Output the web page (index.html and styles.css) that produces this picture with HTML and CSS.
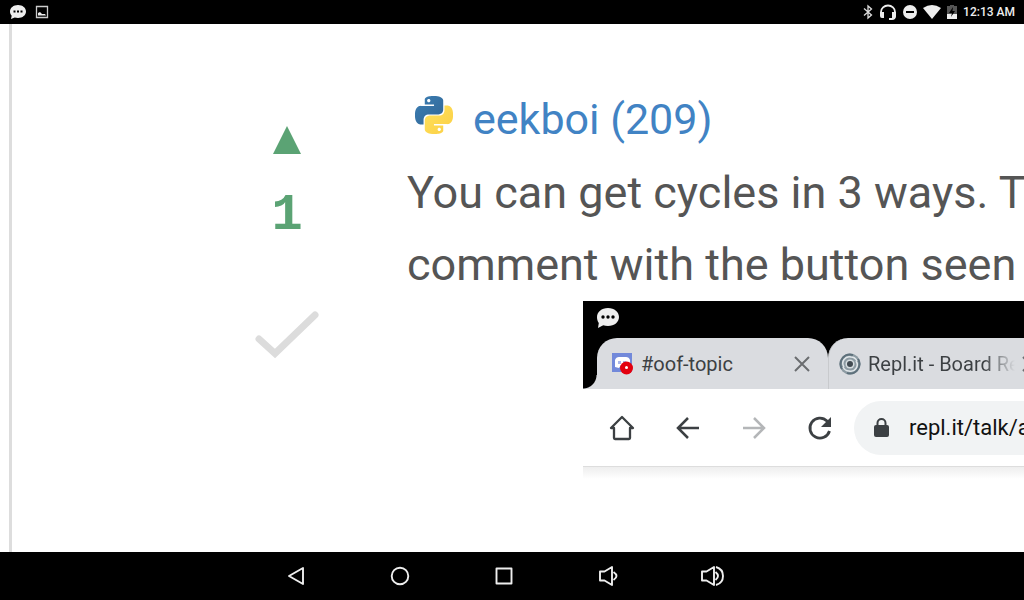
FILE: index.html
```html
<!DOCTYPE html>
<html lang="en">

<head>
    <meta charset="UTF-8">
    <meta name="viewport" content="width=device-width, initial-scale=1.0">
    <title>Repl Talk</title>
    <link rel="stylesheet" href="styles.css">
</head>

<body>
    <header class="status-bar">
        <svg width="18" height="16" viewBox="0 0 18 16">
            <path fill="#eee" d="M9 1c4.600 0 8 2.900 8 6.500S13.600 14 9 14c-1.200 0-2.300-.2-3.300-.5L2 15l.7-3.300C1.600 10.500 1 9.100 1 7.500 1 3.900 4.400 1 9 1z"/>
            <path d="M4.500 6.500h2v2h-2zM8 6.500h2v2H8zM11.500 6.500h2v2h-2z"/>
        </svg>
        <svg width="14" height="14" viewBox="0 0 14 14">
            <path fill="none" stroke="#ccc" stroke-width="1.300" d="M1.500 1.500h11v11h-11z"/>
            <path fill="#eee" d="M3 10.500V8l2-1 2 2h3l1 1.500z"/>
        </svg>
        <div class="status-right">
            <svg width="12" height="16" viewBox="0 0 12 16">
                <path fill="none" stroke="#ddd" stroke-width="1.300" d="M2 4.500l7.500 6.500L6 14V2l3.500 3L2 11.500"/>
            </svg>
            <svg width="18" height="17" viewBox="0 0 18 17">
                <path fill="none" stroke="#eee" stroke-width="1.800" d="M2 9V8a7 6.500 0 0 1 14 0v4q0 3-3 3h-3"/>
                <path fill="#eee" d="M1 8h4v6H3q-2 0-2-2zM13 8h4v4q0 2-2 2h-2z"/>
            </svg>
            <svg width="16" height="16" viewBox="0 0 16 16">
                <circle cx="8" cy="8" r="7" fill="#eee"/>
                <path d="M4 7h8v2H4z"/>
            </svg>
            <svg width="18" height="14" viewBox="0 0 18 14">
                <path fill="#eee" d="M0 3q9-6 18 0L9 14z"/>
            </svg>
            <svg width="12" height="16" viewBox="0 0 12 16">
                <path fill="#555" d="M1 2h3V1h4v1h3v13H1z"/>
                <path fill="#eee" d="M1 10h10v5H1z"/>
                <path d="M7 3L3 9h3l-1 4 4-6H6.500z"/>
            </svg>
            <span class="clock">12:13 AM</span>
        </div>
    </header>

    <main class="thread">
        <article class="comment">
            <div class="votes">
                <button aria-label="Upvote">
                    <svg width="28" height="28" viewBox="0 0 28 28"><path fill="#5ba374" d="M14 0l14 28H0z"/></svg>
                </button>
                <div class="score">1</div>
                <button aria-label="Accept answer">
                    <svg width="64" height="50" viewBox="0 0 64 50">
                        <path fill="none" stroke="#dcdcdc" stroke-width="7" stroke-linecap="round" d="M4 29l16 14.500L60 5"/>
                    </svg>
                </button>
            </div>

            <div class="content">
                <div class="author">
                    <svg width="38" height="38" viewBox="0 0 24 24">
                        <defs>
                            <linearGradient id="blue" x1="0" y1="0" x2="1" y2="1">
                                <stop offset="0" stop-color="#3c7fb5"/>
                                <stop offset="1" stop-color="#316594"/>
                            </linearGradient>
                            <linearGradient id="yellow" x1="1" y1="1" x2="0" y2="0">
                                <stop offset="0" stop-color="#ffe15c"/>
                                <stop offset="1" stop-color="#fbcf45"/>
                            </linearGradient>
                            <path id="snake" d="M14.250.18l.9.2.73.26.59.3.45.32.34.34.25.34.16.33.1.3.04.26.02.2-.01.13V8.500l-.05.63-.13.55-.21.46-.26.38-.3.31-.33.25-.35.19-.35.14-.33.1-.3.07-.26.04-.21.02H8.770l-.69.05-.59.14-.5.22-.41.27-.33.32-.27.35-.2.36-.15.37-.1.35-.07.32-.04.27-.02.21v3.060H3.170l-.21-.03-.28-.07-.32-.12-.35-.18-.36-.26-.36-.36-.35-.46-.32-.59-.28-.73-.21-.88-.14-1.050-.05-1.230.06-1.220.16-1.040.24-.87.32-.71.36-.57.4-.44.42-.33.42-.24.4-.16.36-.1.32-.05.24-.01h.16l.06.01h8.160v-.83H6.180l-.01-2.750-.02-.37.05-.34.11-.31.17-.28.25-.26.31-.23.38-.2.44-.18.51-.15.58-.12.64-.1.71-.06.77-.04.84-.02 1.270.05zm-6.300 1.980l-.23.33-.08.41.08.41.23.34.33.22.41.09.41-.09.33-.22.23-.34.08-.41-.08-.41-.23-.33-.33-.22-.41-.09-.41.09z"/>
                        </defs>
                        <use href="#snake" fill="url(#blue)"/>
                        <use href="#snake" fill="url(#yellow)" transform="rotate(180 12 12)"/>
                    </svg>
                    <a href="#">eekboi (209)</a>
                </div>
                <p class="text">You can get cycles in 3 ways. T<br>comment with the button seen</p>

                <div class="browser">
                    <div class="browser-top">
                        <svg width="24" height="22" viewBox="0 0 24 22">
                            <path fill="#eee" d="M12 1c6.500 0 11 4 11 9s-4.500 9-11 9c-1.800 0-3.400-.3-4.800-.8L2 21l.8-5C1.600 14.300 1 12.200 1 10c0-5 4.500-9 11-9z"/>
                            <circle cx="7" cy="10" r="1.700"/><circle cx="12" cy="10" r="1.700"/><circle cx="17" cy="10" r="1.700"/>
                        </svg>
                    </div>
                    <div class="tabs">
                        <div class="tab">
                            <svg width="22" height="22" viewBox="0 0 22 22">
                                <path fill="#7289da" d="M0 0h20v19H0z"/>
                                <path fill="#fff" d="M3 14V7q1-3 4-3h7q3 0 4 3v5H9l-2 3z"/>
                                <path fill="#a9b6ea" d="M6 8h3v3H6zM11 8h3v3h-3z"/>
                                <circle cx="14.500" cy="15" r="6.500" fill="#e3000f"/>
                                <circle cx="14.500" cy="14.500" r="1.500" fill="#fff"/>
                            </svg>
                            <span class="tab-title">#oof-topic</span>
                            <button aria-label="Close tab">
                                <svg width="16" height="16" viewBox="0 0 16 16"><path fill="none" stroke="#6b6d70" stroke-width="2" d="M1 1l14 14M15 1L1 15"/></svg>
                            </button>
                        </div>
                        <div class="tab">
                            <svg width="22" height="22" viewBox="0 0 22 22">
                                <circle cx="11" cy="11" r="10.500" fill="#8d9ba3"/>
                                <path fill="none" stroke="#5d707b" stroke-width="2" d="M3 16A9.500 9.500 0 0 1 14 2M19 6A9.500 9.500 0 0 1 8 20"/>
                                <path fill="none" stroke="#e1e7ea" stroke-width="1.500" d="M5 14a6.500 6.500 0 0 1 7-10q4 0 6 4M17 8a6.500 6.500 0 0 1-7 10q-4 0-6-4"/>
                                <circle cx="11" cy="11" r="4.500" fill="#d5dde0"/>
                                <circle cx="11" cy="11" r="3" fill="#414b52"/>
                            </svg>
                            <span class="tab-title fade">Repl.it - Board Re</span>
                            <button aria-label="Close tab">
                                <svg width="16" height="16" viewBox="0 0 16 16"><path fill="none" stroke="#6b6d70" stroke-width="2" d="M1 1l14 14M15 1L1 15"/></svg>
                            </button>
                        </div>
                    </div>
                    <div class="toolbar">
                        <button class="tool" aria-label="Home">
                            <svg width="28" height="28" viewBox="0 0 28 28"><path fill="none" stroke="#3c4043" stroke-width="2.300" stroke-linejoin="round" stroke-linecap="round" d="M3 14L14 3l11 11h-3v10q0 1-1 1H7q-1 0-1-1V14z"/></svg>
                        </button>
                        <button class="tool" aria-label="Back">
                            <svg width="28" height="28" viewBox="0 0 28 28"><path fill="none" stroke="#3c4043" stroke-width="2.500" d="M25 14H4M14 4L4 14l10 10"/></svg>
                        </button>
                        <button class="tool" aria-label="Forward">
                            <svg width="28" height="28" viewBox="0 0 28 28"><path fill="none" stroke="#b4b6b8" stroke-width="2.500" d="M3 14h21M14 4l10 10-10 10"/></svg>
                        </button>
                        <button class="tool" aria-label="Reload">
                            <svg width="28" height="28" viewBox="0 0 28 28">
                                <path fill="none" stroke="#3c4043" stroke-width="2.800" d="M23.500 17A10 10 0 1 1 21 7l2 2"/>
                                <path fill="#3c4043" d="M25 3v10H15z"/>
                            </svg>
                        </button>
                        <div class="address">
                            <svg width="16" height="20" viewBox="0 0 16 20">
                                <rect x="0" y="7" width="15" height="12" rx="2" fill="#3c4043"/>
                                <path fill="none" stroke="#3c4043" stroke-width="2" d="M3.500 8V5a4 4 0 0 1 8 0v3"/>
                            </svg>
                            <input type="text" value="repl.it/talk/a" aria-label="Address">
                        </div>
                    </div>
                </div>
            </div>
        </article>
    </main>

    <nav class="nav-bar">
        <button aria-label="Back">
            <svg width="24" height="24" viewBox="0 0 24 24"><path d="M19 4v16L5 12z"/></svg>
        </button>
        <button aria-label="Home">
            <svg width="24" height="24" viewBox="0 0 24 24"><circle cx="12" cy="12" r="8.300"/></svg>
        </button>
        <button aria-label="Recent apps">
            <svg width="24" height="24" viewBox="0 0 24 24"><path d="M4.500 4.500h15v15h-15z"/></svg>
        </button>
        <button aria-label="Volume down">
            <svg width="24" height="24" viewBox="0 0 24 24"><path d="M4 7.500h4.500L16 3v18l-7.500-4.500H4zM17.500 8q6 4 0 8"/></svg>
        </button>
        <button aria-label="Volume up">
            <svg width="24" height="24" viewBox="0 0 24 24"><path d="M2 7.500h4.500L14 3v18l-7.500-4.500H2zM15.500 8q5 4 0 8M16 3q7 2 7 9t-7 9"/></svg>
        </button>
    </nav>
</body>
</html>
```
FILE: styles.css
```css
* {
    box-sizing: border-box;
}

body {
    display: flex;
    flex-direction: column;
    height: 100vh;
    margin: 0;
    background-color: #fff;
    font-family: Roboto, sans-serif;
    overflow: hidden;
}

svg {
    display: block;
    flex-shrink: 0;
}

button {
    display: flex;
    align-items: center;
    justify-content: center;
    padding: 0;
    border: none;
    background: none;
    cursor: pointer;
}

.status-bar {
    display: flex;
    align-items: center;
    gap: 8px;
    flex-shrink: 0;
    height: 24px;
    padding: 0 9px;
    background-color: #000;
}

.status-right {
    display: flex;
    align-items: center;
    gap: 5px;
    margin-left: auto;
}

.clock {
    color: #eee;
    font-size: 12px;
    font-weight: 500;
}

.thread {
    flex: 1;
    min-height: 0;
    margin-left: 9px;
    border-left: 3px solid #ddd;
    overflow: hidden;
}

.comment {
    display: flex;
    gap: 40px;
    padding: 56px 0 0 195px;
}

.votes {
    display: flex;
    flex-direction: column;
    align-items: center;
    flex-shrink: 0;
    width: 160px;
    padding-top: 46px;
}

.score {
    margin: 28px 0 60px;
    color: #5ba374;
    font-family: "Liberation Mono", monospace;
    font-size: 52px;
    font-weight: bold;
    line-height: 68px;
}

.content {
    flex: 1;
    min-width: 0;
}

.author {
    display: flex;
    gap: 20px;
    height: 77px;
    padding: 16px 0 0 8px;
}

.author a {
    color: #4183c4;
    font-size: 43px;
    line-height: 46px;
    text-decoration: none;
    white-space: nowrap;
}

.text {
    margin: 0;
    color: #555;
    font-size: 45px;
    line-height: 72px;
    white-space: nowrap;
}

.browser {
    margin-left: 176px;
    overflow: hidden;
    background-color: #000;
    color: #3c4043;
}

.browser-top {
    height: 37px;
    padding: 6px 13px;
}

.tabs {
    display: flex;
    padding-left: 14px;
}

.tab {
    position: relative;
    display: flex;
    align-items: center;
    flex-shrink: 0;
    gap: 7px;
    width: 231px;
    height: 51px;
    padding: 0 18px 0 15px;
    border-radius: 20px 20px 0 0;
    background-color: #dadce0;
}

.tab + .tab {
    padding-left: 10px;
    border-left: 1px solid #c8cacd;
}

/* curved foot on the left of the first tab */
.tab:first-child::before {
    content: "";
    position: absolute;
    left: -14px;
    bottom: 0;
    width: 14px;
    height: 14px;
    background: radial-gradient(circle at 0 0, transparent 13px, #dadce0 14px);
}

.tab-title {
    flex: 1;
    overflow: hidden;
    font-size: 20px;
    white-space: nowrap;
}

.fade {
    flex: 0 0 147px;
    background: linear-gradient(to right, #3c4043 116px, #dadce0 147px);
    background-clip: text;
    color: transparent;
}

.toolbar {
    display: flex;
    align-items: center;
    height: 78px;
    padding-left: 6px;
    border-bottom: 1px solid #ddd;
    background-color: #fff;
}

.tool {
    flex-shrink: 0;
    width: 66px;
    height: 66px;
}

/* toolbar shadow */
.browser::after {
    content: "";
    display: block;
    height: 12px;
    background: linear-gradient(#eee, #fff);
}

.address {
    display: flex;
    align-items: center;
    flex: 1;
    gap: 19px;
    min-width: 0;
    height: 54px;
    margin-left: 1px;
    padding-left: 20px;
    border-radius: 27px 0 0 27px;
    background-color: #f1f3f4;
}

.address input {
    flex: 1;
    min-width: 0;
    padding: 0;
    border: none;
    outline: none;
    background: none;
    color: #111;
    font-family: inherit;
    font-size: 22px;
}

.nav-bar {
    display: flex;
    justify-content: center;
    flex-shrink: 0;
    height: 48px;
    padding-right: 16px;
    background-color: #000;
}

.nav-bar button {
    width: 104px;
}

.nav-bar svg {
    fill: none;
    stroke: #eee;
    stroke-width: 1.9;
    stroke-linejoin: round;
}
```
